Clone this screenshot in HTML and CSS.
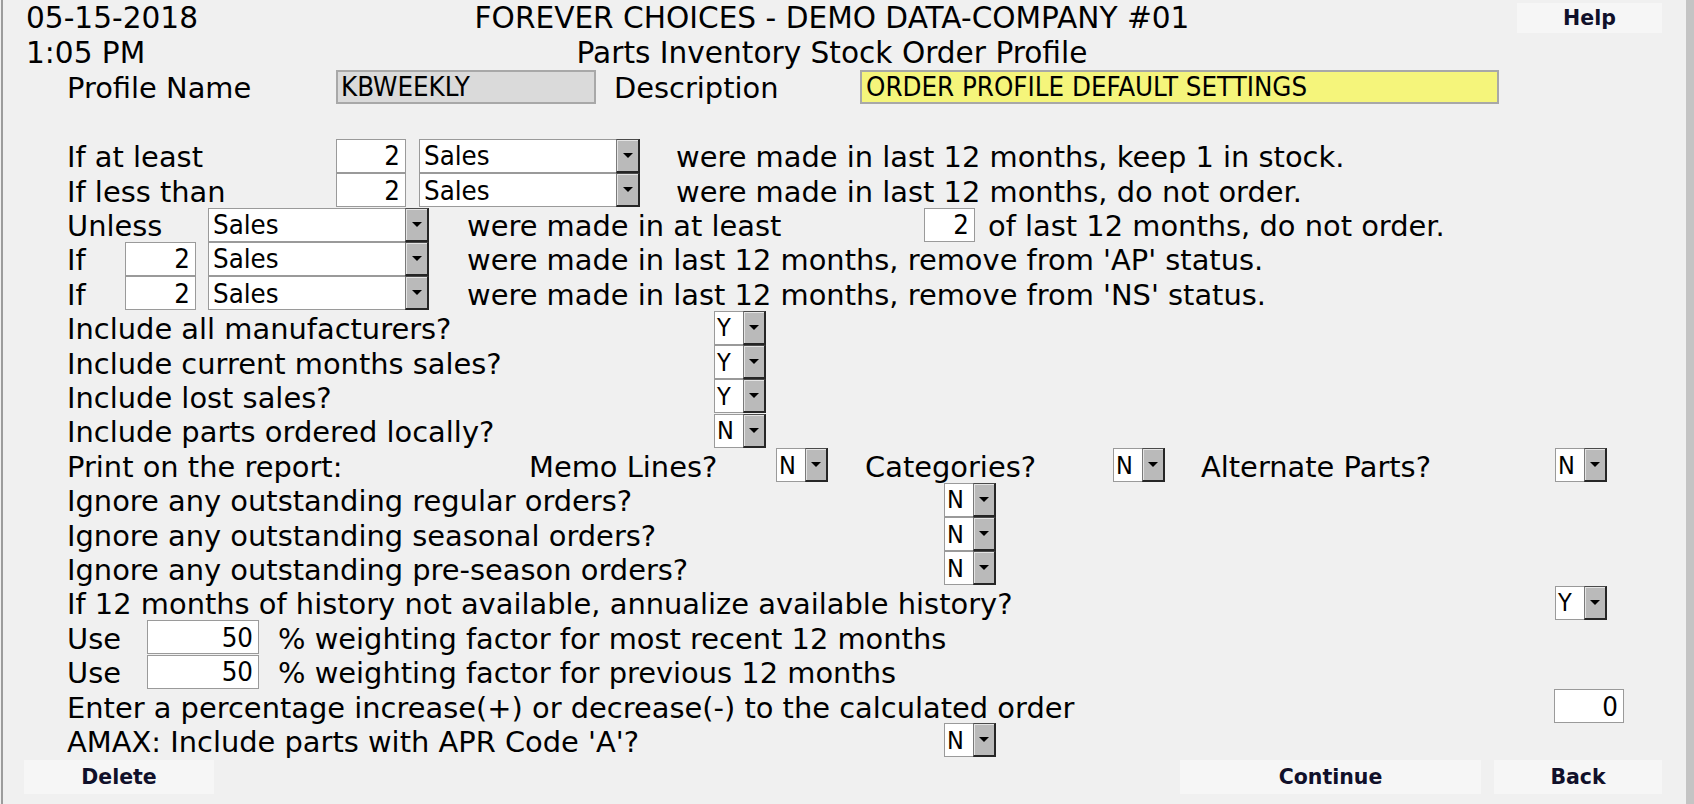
FILE: index.html
```html
<!DOCTYPE html>
<html lang="en">
<head>
    <meta charset="UTF-8">
    <title>Parts Inventory Stock Order Profile</title>
    <link rel="stylesheet" href="styles.css">
</head>
<body>
    <div class="window">
        <div class="head">
            <span>05-15-2018</span>
            <span class="title">FOREVER CHOICES - DEMO DATA-COMPANY #01</span>
            <button class="btn help">Help</button>
        </div>
        <div class="head">
            <span>1:05 PM</span>
            <span class="title">Parts Inventory Stock Order Profile</span>
            <span></span>
        </div>

        <form class="profile" onsubmit="return false">
            <div class="row">
                <span class="lbl c-first">Profile Name</span>
                <input class="fld name" value="KBWEEKLY" readonly>
                <span class="lbl c-desc">Description</span>
                <input class="fld desc" value="ORDER PROFILE DEFAULT SETTINGS">
            </div>
            <div class="row"></div>

            <div class="row">
                <span class="lbl c-first">If at least</span>
                <input class="fld num n70" value="2">
                <span class="dd sales gap13"><span class="dd-val">Sales</span><span class="dd-btn"></span></span>
                <span class="txt gap36">were made in last 12 months, keep 1 in stock.</span>
            </div>
            <div class="row">
                <span class="lbl c-first">If less than</span>
                <input class="fld num n70" value="2">
                <span class="dd sales gap13"><span class="dd-val">Sales</span><span class="dd-btn"></span></span>
                <span class="txt gap36">were made in last 12 months, do not order.</span>
            </div>
            <div class="row">
                <span class="lbl c-unless">Unless</span>
                <span class="dd sales"><span class="dd-val">Sales</span><span class="dd-btn"></span></span>
                <span class="lbl c-atleast gap38">were made in at least</span>
                <input class="fld num n51" value="2">
                <span class="txt gap13">of last 12 months, do not order.</span>
            </div>
            <div class="row">
                <span class="lbl c-if">If</span>
                <input class="fld num n71" value="2">
                <span class="dd sales gap12"><span class="dd-val">Sales</span><span class="dd-btn"></span></span>
                <span class="txt gap38">were made in last 12 months, remove from 'AP' status.</span>
            </div>
            <div class="row">
                <span class="lbl c-if">If</span>
                <input class="fld num n71" value="2">
                <span class="dd sales gap12"><span class="dd-val">Sales</span><span class="dd-btn"></span></span>
                <span class="txt gap38">were made in last 12 months, remove from 'NS' status.</span>
            </div>

            <div class="row">
                <span class="lbl c-incl">Include all manufacturers?</span>
                <span class="dd yn"><span class="dd-val">Y</span><span class="dd-btn"></span></span>
            </div>
            <div class="row">
                <span class="lbl c-incl">Include current months sales?</span>
                <span class="dd yn"><span class="dd-val">Y</span><span class="dd-btn"></span></span>
            </div>
            <div class="row">
                <span class="lbl c-incl">Include lost sales?</span>
                <span class="dd yn"><span class="dd-val">Y</span><span class="dd-btn"></span></span>
            </div>
            <div class="row">
                <span class="lbl c-incl">Include parts ordered locally?</span>
                <span class="dd yn"><span class="dd-val">N</span><span class="dd-btn"></span></span>
            </div>

            <div class="row">
                <span class="lbl c-print">Print on the report:</span>
                <span class="lbl c-memo">Memo Lines?</span>
                <span class="dd yn"><span class="dd-val">N</span><span class="dd-btn"></span></span>
                <span class="lbl c-cat gap37">Categories?</span>
                <span class="dd yn"><span class="dd-val">N</span><span class="dd-btn"></span></span>
                <span class="lbl c-alt gap36">Alternate Parts?</span>
                <span class="dd yn"><span class="dd-val">N</span><span class="dd-btn"></span></span>
            </div>

            <div class="row">
                <span class="lbl c-ignore">Ignore any outstanding regular orders?</span>
                <span class="dd yn"><span class="dd-val">N</span><span class="dd-btn"></span></span>
            </div>
            <div class="row">
                <span class="lbl c-ignore">Ignore any outstanding seasonal orders?</span>
                <span class="dd yn"><span class="dd-val">N</span><span class="dd-btn"></span></span>
            </div>
            <div class="row">
                <span class="lbl c-ignore">Ignore any outstanding pre-season orders?</span>
                <span class="dd yn"><span class="dd-val">N</span><span class="dd-btn"></span></span>
            </div>
            <div class="row">
                <span class="lbl c-wide">If 12 months of history not available, annualize available history?</span>
                <span class="dd yn"><span class="dd-val">Y</span><span class="dd-btn"></span></span>
            </div>

            <div class="row">
                <span class="lbl c-use">Use</span>
                <input class="fld num n112" value="50">
                <span class="txt gap19">% weighting factor for most recent 12 months</span>
            </div>
            <div class="row">
                <span class="lbl c-use">Use</span>
                <input class="fld num n112" value="50">
                <span class="txt gap19">% weighting factor for previous 12 months</span>
            </div>
            <div class="row">
                <span class="lbl c-pct">Enter a percentage increase(+) or decrease(-) to the calculated order</span>
                <input class="fld num n70" value="0">
            </div>
            <div class="row">
                <span class="lbl c-ignore">AMAX: Include parts with APR Code 'A'?</span>
                <span class="dd yn"><span class="dd-val">N</span><span class="dd-btn"></span></span>
            </div>

            <div class="actions">
                <button class="btn delete">Delete</button>
                <div class="actions-right">
                    <button class="btn continue">Continue</button>
                    <button class="btn back">Back</button>
                </div>
            </div>
        </form>
    </div>
</body>
</html>
```

FILE: styles.css
```css
body {
    margin: 0;
    background-color: #f0f0f0;
    color: #000;
    font-family: "DejaVu Sans", Verdana, sans-serif;
    font-size: 28.9px;
}
.window {
    margin-left: 1px;
    height: 804px;
    padding-top: 1px;
    box-sizing: border-box;
    border-left: 2px solid #9c9c9c;
    border-right: 8px solid #c4c4c4;
}
.head {
    display: grid;
    grid-template-columns: 1fr auto 1fr;
    align-items: center;
    height: 34.4px;
    padding: 0 24px 0 23px;
    white-space: nowrap;
    font-size: 29.6px;
}
.title {
    margin-right: 24px;
}
.row {
    display: flex;
    align-items: center;
    height: 34.4px;
    padding-left: 64px;
    white-space: nowrap;
}
.lbl, .txt {
    flex: none;
    padding-top: 3px;
}

/* label columns */
.c-first { width: 269px; }
.c-desc { width: 246px; margin-left: 18px; }
.c-unless { width: 141px; }
.c-atleast { width: 457px; }
.c-if { width: 58px; }
.c-incl { width: 647px; }
.c-print { width: 462px; }
.c-memo { width: 247px; }
.c-cat { width: 248px; }
.c-alt { width: 354px; }
.c-ignore { width: 877px; }
.c-wide { width: 1488px; }
.c-use { width: 80px; }
.c-pct { width: 1487px; }

.gap12 { margin-left: 12px; }
.gap13 { margin-left: 13px; }
.gap19 { margin-left: 19px; }
.gap36 { margin-left: 36px; }
.gap37 { margin-left: 37px; }
.gap38 { margin-left: 38px; }

/* text fields */
.fld {
    flex: none;
    box-sizing: border-box;
    height: 34px;
    margin: 0;
    padding: 0 4px;
    border: 1px solid #9a9a9a;
    border-radius: 0;
    background-color: #fff;
    color: #000;
    font-family: "DejaVu Sans Condensed", "DejaVu Sans", sans-serif;
    font-stretch: condensed;
    font-size: 27.4px;
    outline: none;
}
.num {
    text-align: right;
    padding-right: 5px;
}
.n51 { width: 51px; }
.n70 { width: 70px; }
.n71 { width: 71px; }
.n112 { width: 112px; }
.name {
    width: 260px;
    border: 2px solid #a8a8a8;
    background-color: #dadada;
    padding-left: 3px;
}
.desc {
    width: 639px;
    border: 2px solid #a8a8a8;
    background-color: #f5f57b;
    padding-left: 4px;
}

/* drop downs */
.dd {
    flex: none;
    display: flex;
    height: 34px;
}
.dd.sales { width: 221px; }
.dd.yn { width: 52px; }
.dd-val {
    flex: 1;
    display: flex;
    align-items: center;
    box-sizing: border-box;
    padding-left: 4px;
    border: 1px solid #9a9a9a;
    border-right: none;
    background-color: #fff;
    font-family: "DejaVu Sans Condensed", "DejaVu Sans", sans-serif;
    font-stretch: condensed;
    font-size: 27.4px;
}
.yn .dd-val {
    padding-left: 2px;
    font-size: 25px;
}
.dd-btn {
    flex: none;
    width: 24px;
    box-sizing: border-box;
    display: flex;
    align-items: center;
    justify-content: center;
    background-color: #bababa;
    border: 2px solid #262626;
    border-top: 1px solid #4a4a4a;
    border-left: 1px solid #7a7a7a;
    box-shadow: inset 1px 1px 0 #e4e4e4;
}
.yn .dd-btn {
    width: 23px;
}
.dd-btn::after {
    content: "";
    border-left: 5px solid transparent;
    border-right: 5px solid transparent;
    border-top: 5px solid #000;
}

/* buttons */
.btn {
    border: none;
    background-color: #f6f6f6;
    color: #10102a;
    font-family: "DejaVu Sans", Verdana, sans-serif;
    font-weight: bold;
    font-size: 20.5px;
    cursor: pointer;
    padding: 0;
}
.help {
    justify-self: end;
    width: 145px;
    height: 30px;
}
.actions {
    display: flex;
    justify-content: space-between;
    align-items: center;
    height: 34.4px;
    margin-top: 2px;
    padding: 0 24px 0 21px;
}
.actions-right {
    display: flex;
    gap: 13px;
}
.delete { width: 190px; height: 34px; }
.continue { width: 301px; height: 34px; }
.back { width: 168px; height: 34px; }
```
